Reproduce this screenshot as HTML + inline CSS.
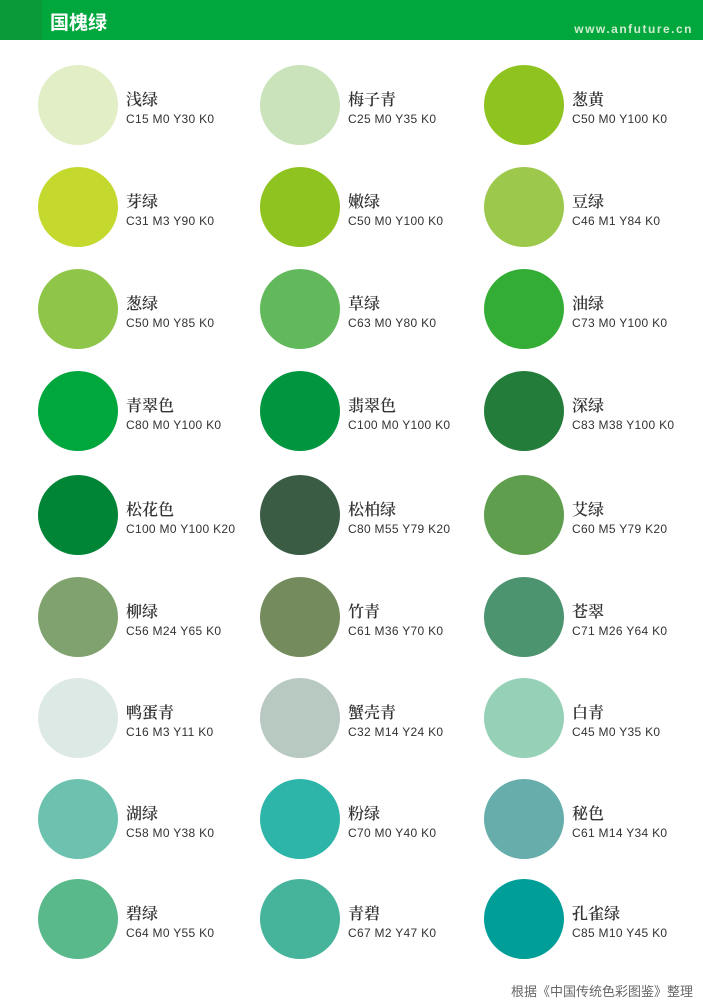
<!DOCTYPE html><html><head><meta charset="utf-8"><style>
body{margin:0;width:703px;height:1003px;background:#fff;position:relative;overflow:hidden;font-family:"Liberation Sans","Noto Sans CJK SC",sans-serif}
.hd{position:absolute;left:0;top:0;width:703px;height:40px;background:#00a73c}
.dec{position:absolute;left:0;top:0;width:42px;height:40px;background:#0a9a3a}
.t{position:absolute;left:50px;top:8px;color:#fff;font-size:19px;font-weight:bold}
.u{position:absolute;right:10px;top:22px;color:#cfeccf;font-size:12px;letter-spacing:1.5px;font-weight:bold}
.c{position:absolute;width:80px;height:80px;border-radius:50%}
.n{position:absolute;font-family:"Noto Serif CJK SC",serif;font-size:16px;color:#333;font-weight:600}
.k{position:absolute;font-size:12px;color:#333;letter-spacing:0.3px}
.f{position:absolute;right:10px;top:981px;font-size:13px;color:#666}
</style></head><body>
<div class="hd"><div class="dec"></div><div class="t">国槐绿</div><div class="u">www.anfuture.cn</div></div>
<div id="g"></div>
<div class="f">根据《中国传统色彩图鉴》整理</div>
<script>
var d=[["浅绿","C15 M0 Y30 K0","#e1eec6"],["梅子青","C25 M0 Y35 K0","#cbe3bb"],["葱黄","C50 M0 Y100 K0","#8fc31f"],
["芽绿","C31 M3 Y90 K0","#c4d82e"],["嫩绿","C50 M0 Y100 K0","#8fc31f"],["豆绿","C46 M1 Y84 K0","#9cc94b"],
["葱绿","C50 M0 Y85 K0","#8fc64a"],["草绿","C63 M0 Y80 K0","#62b95c"],["油绿","C73 M0 Y100 K0","#33ad35"],
["青翠色","C80 M0 Y100 K0","#00a73c"],["翡翠色","C100 M0 Y100 K0","#009640"],["深绿","C83 M38 Y100 K0","#237c3a"],
["松花色","C100 M0 Y100 K20","#008436"],["松柏绿","C80 M55 Y79 K20","#3a5c45"],["艾绿","C60 M5 Y79 K20","#5e9e4e"],
["柳绿","C56 M24 Y65 K0","#80a26e"],["竹青","C61 M36 Y70 K0","#748b5e"],["苍翠","C71 M26 Y64 K0","#4b946f"],
["鸭蛋青","C16 M3 Y11 K0","#dde9e5"],["蟹壳青","C32 M14 Y24 K0","#b7c9c1"],["白青","C45 M0 Y35 K0","#96d0b6"],
["湖绿","C58 M0 Y38 K0","#6cc2af"],["粉绿","C70 M0 Y40 K0","#2db5aa"],["秘色","C61 M14 Y34 K0","#67adab"],
["碧绿","C64 M0 Y55 K0","#59b98b"],["青碧","C67 M2 Y47 K0","#46b39b"],["孔雀绿","C85 M10 Y45 K0","#009e98"]];
var tops=[65,167,269,371,475,577,678,779,879],xs=[38,260,484],h="";
d.forEach(function(e,i){var r=Math.floor(i/3),c=i%3,x=xs[c],y=tops[r];
h+='<div class="c" style="left:'+x+'px;top:'+y+'px;background:'+e[2]+'"></div><div class="n" style="left:'+(x+88)+'px;top:'+(y+22)+'px">'+e[0]+'</div><div class="k" style="left:'+(x+88)+'px;top:'+(y+47)+'px">'+e[1]+'</div>';});
document.getElementById("g").innerHTML=h;
</script></body></html>
